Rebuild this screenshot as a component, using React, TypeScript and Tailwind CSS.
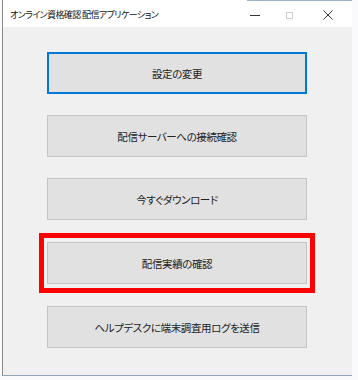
import React from 'react';

const jp = "font-['Noto_Sans_CJK_JP','Noto_Sans',sans-serif] [font-feature-settings:'palt']";

function WinButton({ label, focused }: { label: string; focused?: boolean }) {
  return (
    <button
      className={
        'flex h-[42px] w-[260px] items-center justify-center bg-[#e1e1e1] text-[10.5px] tracking-[-0.4px] text-[#222] ' +
        (focused ? 'border-2 border-[#0078d7]' : 'border-[1.5px] border-[#c4c4c4]')
      }
    >
      <span className="pt-[1px]">{label}</span>
    </button>
  );
}

export default function App() {
  return (
    <div className={`h-[380px] w-[358px] overflow-hidden bg-[#fafafd] ${jp}`}>
      <div className="ml-[2px] w-[350px] border-b border-l border-b-[#8ea4bb] border-l-[#8a8a8a] bg-white">
        {/* title bar */}
        <div className="relative flex h-[27px] items-center bg-white pl-[7px] pt-[3px]">
          <div className="absolute right-0 top-0 h-px w-[105px] bg-[#9fb3c8]" />
          <span className="text-[9px] tracking-[-0.6px] text-[#111]">オンライン資格確認 配信アプリケーション</span>
          <div className="ml-auto flex items-center">
            <div className="flex w-[34px] justify-center">
              <div className="h-px w-[10px] bg-[#333]" />
            </div>
            <div className="flex w-[34px] justify-center">
              <div className="h-[7px] w-[7px] border border-[#cfcfcf]" />
            </div>
            <div className="flex w-[46px] justify-center pr-[2px]">
              <svg width="10" height="10" viewBox="0 0 10 10">
                <path d="M0.5 0.5 L9.5 9.5 M9.5 0.5 L0.5 9.5" stroke="#333" strokeWidth="1" fill="none" />
              </svg>
            </div>
          </div>
        </div>
        {/* client */}
        <div className="flex h-[348px] flex-col bg-[#f0f0f0] pl-[44px] pt-[25px]">
          <WinButton label="設定の変更" focused />
          <div className="mt-[21px]">
            <WinButton label="配信サーバーへの接続確認" />
          </div>
          <div className="mt-[21px]">
            <WinButton label="今すぐダウンロード" />
          </div>
          <div className="-ml-[8px] mt-[13px] w-[276px] border-[5px] border-[#ff0000] px-[3px] pb-[4px] pt-[4px]">
            <WinButton label="配信実績の確認" />
          </div>
          <div className="mt-[13px]">
            <WinButton label="ヘルプデスクに端末調査用ログを送信" />
          </div>
        </div>
      </div>
    </div>
  );
}
